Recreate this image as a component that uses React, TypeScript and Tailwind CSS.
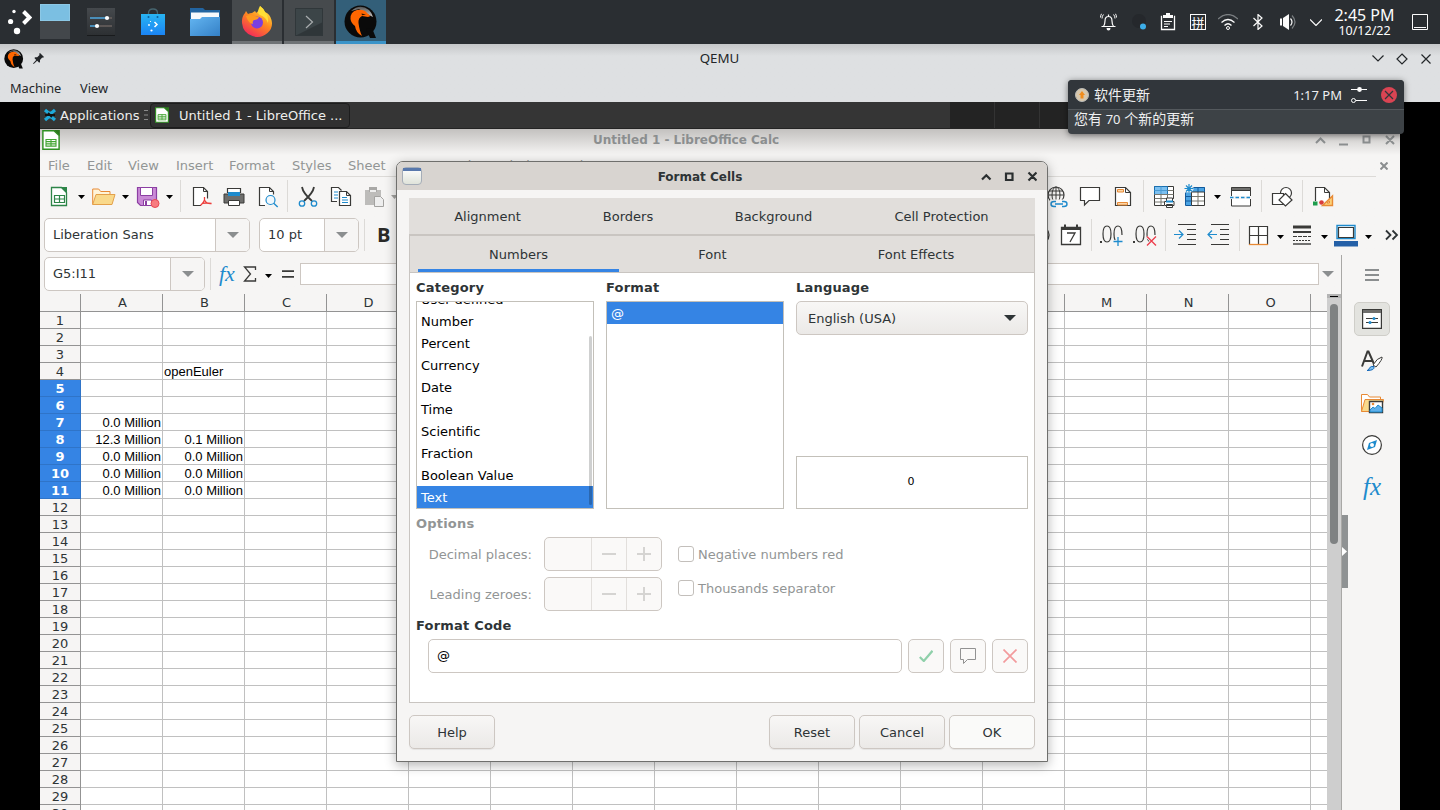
import React from "react";

type IconProps = { className?: string; box?: string; children: React.ReactNode };

function Icon({ className = "w-6 h-6", box = "0 0 24 24", children }: IconProps) {
  return (
    <svg viewBox={box} className={`block shrink-0 ${className}`} fill="none">
      {children}
    </svg>
  );
}

const Arrow = ({ className = "" }: { className?: string }) => (
  <Icon className={`w-[7px] h-1 ${className}`} box="0 0 7 4">
    <path d="M0 0h7L3.5 4z" fill="#000" />
  </Icon>
);

const ComboArrow = () => (
  <Icon className="w-3 h-1.5" box="0 0 12 6">
    <path d="M0 0h12L6 6z" fill="#8b8e8f" />
  </Icon>
);

const Sep = ({ className = "" }: { className?: string }) => (
  <div className={`w-px h-8 shrink-0 bg-[#dcdad7] ${className}`} />
);

function Qemu({ className }: { className: string }) {
  return (
    <Icon className={className} box="0 0 34 34">
      <defs>
        <linearGradient id="qemuGloss" x1="0" y1="0" x2="0" y2="1">
          <stop stopColor="#555" />
          <stop offset="1" stopColor="#c9c9c9" />
        </linearGradient>
      </defs>
      <circle cx="16.5" cy="16.5" r="16" fill="#0a0a0a" />
      <path d="M22 24l6-1 4 10h-6z" fill="#0a0a0a" />
      <path d="M7 6Q16-2 25 5q3 3 4 7l-6-3-8-5z" fill="url(#qemuGloss)" />
      <path d="M6.500 14Q6 7 13 5q7-1 10 3l3.500 3-2.500 1-6-1q-4 2-3.500 7 1 8 3.500 13-6-3-7-10-4-3-4.500-7z" fill="#f60" />
      <path d="M17.500 8.500l4.500 1-4 .8z" fill="#2a1200" />
    </Icon>
  );
}

function CalcDoc({ className }: { className: string }) {
  return (
    <Icon className={className} box="0 0 16 18">
      <path d="M.7.7h10L15.3 5v12.3H.7z" fill="#fff" stroke="#2f8f22" strokeWidth="1.3" />
      <path d="M10.500 0H16v5.500z" fill="#2c7a1d" />
      <path d="M3.500 8.500h9v6h-9zM3.500 10.500h9M3.500 12.500h9M8 8.500v6" stroke="#43a532" />
    </Icon>
  );
}

function Taskbar() {
  return (
    <div className="h-11 shrink-0 flex items-start bg-[#2a2e32]">
      <Icon className="ml-2 mt-2 w-6 h-7" box="0 0 24 28">
        <path d="M15.500 3.500l6 6-6 6" stroke="#fff" strokeWidth="4" />
        <circle cx="6" cy="3.500" r="1.700" fill="#fff" />
        <circle cx="2.600" cy="13.500" r="2.600" fill="#fff" />
        <circle cx="9" cy="23" r="3.200" fill="#fff" />
      </Icon>
      <div className="ml-2 mt-1 w-[30px] h-[35px]">
        <div className="h-[17px] bg-[#7bbfe2] border border-[#8cc8e6]" />
        <div className="h-[18px] bg-[#43474b]" />
      </div>
      <Icon className="ml-[17px] mt-2 w-7 h-7" box="0 0 28 28">
        <defs>
          <linearGradient id="dark" x1="0" y1="0" x2="0" y2="1">
            <stop stopColor="#45494d" />
            <stop offset="1" stopColor="#2c2f32" />
          </linearGradient>
        </defs>
        <path d="M0 0h28v28H0z" fill="url(#dark)" />
        <path d="M0 27.500h28" stroke="#191b1d" />
        <path d="M3 10h17M3 18h7" stroke="#4fa8e0" strokeWidth="1.500" />
        <path d="M20 10h5M10 18h15" stroke="#6a625f" strokeWidth="1.500" />
        <circle cx="20" cy="10" r="2.100" fill="#fff" />
        <circle cx="10" cy="18" r="2.100" fill="#fff" />
      </Icon>
      <Icon className="ml-[26px] mt-2 w-6 h-7" box="0 0 24 28">
        <defs>
          <linearGradient id="bag" x1="0" y1="0" x2="0" y2="1">
            <stop stopColor="#28b4f2" />
            <stop offset="1" stopColor="#1b84f4" />
          </linearGradient>
        </defs>
        <path d="M7.500 8V5q0-4 4.500-4t4.500 4v3" stroke="#47656f" strokeWidth="1.300" />
        <path d="M0 6h24v21H0z" fill="url(#bag)" />
        <circle cx="7.500" cy="9" r="1" fill="#0c5f9a" />
        <circle cx="16.500" cy="9" r="1" fill="#0c5f9a" />
        <path d="M13.500 14l2.500 2.500-2.500 2.500" stroke="#fff" strokeWidth="1.500" />
        <circle cx="9.500" cy="13.500" r=".6" fill="#fff" />
        <circle cx="8" cy="17" r=".9" fill="#fff" />
        <circle cx="10.500" cy="22.500" r="1.100" fill="#fff" />
      </Icon>
      <Icon className="ml-[25px] mt-2 w-[30px] h-7" box="0 0 30 28">
        <defs>
          <linearGradient id="folder" x1="0" y1="0" x2="1" y2="1">
            <stop stopColor="#63b5f1" />
            <stop offset="1" stopColor="#3480c6" />
          </linearGradient>
        </defs>
        <path d="M0 0h13l2 2h15v14H0z" fill="#2264a0" />
        <path d="M1 4.500h28V12H1z" fill="#f7f9fb" />
        <path d="M0 11h10l2-2h18v19H0z" fill="url(#folder)" />
      </Icon>
      <div className="ml-3 w-[50px] h-11 flex justify-center bg-[#464a4d] border-b-[3px] border-[#6f7376]">
        <Icon className="mt-1.5 w-8 h-8" box="0 0 32 32">
          <defs>
            <linearGradient id="fox" x1=".8" y1="0" x2=".2" y2="1">
              <stop stopColor="#fff044" />
              <stop offset=".45" stopColor="#ff8a1f" />
              <stop offset="1" stopColor="#f0205f" />
            </linearGradient>
          </defs>
          <path d="M19 0q4 3 5 6 5 2 6.500 8 2 8-4 13-7 6-15 3Q2 27 1 17q-.5-6 3-10l1-2 2 3q2-1 4-1l3-2q1 1 1 2 4-3 4-7z" fill="url(#fox)" />
          <path d="M19 0q4 3 5 6 4 5 3 11-2-6-8-8-4-2 0-9z" fill="#ffdf36" />
          <circle cx="16" cy="16.500" r="6" fill="#7a3fe0" />
          <path d="M5 10q5-2 8 0l5 1q-1 3-5 3-2 1-1 4-5-1-7-8z" fill="#ff9a1f" />
        </Icon>
      </div>
      <div className="ml-0.5 w-[50px] h-11 flex justify-center bg-[#464a4d] border-b-[3px] border-[#6f7376]">
        <Icon className="mt-2 w-7 h-7" box="0 0 28 28">
          <path d="M0 0h28v28H0z" fill="#3c4548" />
          <path d="M0 28h28V14z" fill="#2f3639" />
          <path d="M.5.500h27v27H.5z" stroke="#30373a" />
          <path d="M11 8l6.500 6-6.500 6" stroke="#a9adaf" strokeWidth="1.200" />
        </Icon>
      </div>
      <div className="ml-0.5 w-[50px] h-11 flex justify-center bg-[#335f79] border-b-[3px] border-[#3b94c9]">
        <Qemu className="mt-[5px] w-[34px] h-[34px]" />
      </div>

      <div className="ml-auto h-11 flex items-center">
        <Icon className="w-[17px] h-[18px]" box="0 0 17 18">
          <path d="M1.500 13.500h14M3.500 13.500Q5 11 5 8q0-4.500 3.500-4.500T12 8q0 3 1.500 5.500M8.500 3.500V1.500" stroke="#fcfcfc" strokeWidth="1.200" />
          <path d="M3.500 1.500Q2 3 2 5.500M1.500.800Q.5 2.500.5 4.500M13.500 1.500Q15 3 15 5.500M15.500.800q1 1.700 1 3.700" stroke="#fcfcfc" />
          <path d="M6.500 15h4q0 2.500-2 2.500t-2-2.500z" fill="#fcfcfc" />
        </Icon>
        <Icon className="ml-[15px] w-4 h-4" box="0 0 16 16">
          <circle cx="7" cy="7" r="7" fill="#25282c" />
          <circle cx="11" cy="12.500" r="3" fill="#3daee9" />
        </Icon>
        <Icon className="ml-3 w-4 h-[18px]" box="0 0 16 18">
          <path d="M2 3.500H1.500v13h13v-13H14" stroke="#fcfcfc" strokeWidth="1.300" />
          <path d="M3 5V2h3V0h4v2h3v3z" fill="#fcfcfc" />
          <path d="M4 8.500h8M4 11h6M4 13.500h4" stroke="#fcfcfc" strokeWidth="1.200" />
        </Icon>
        <div className="ml-[14px] w-4 h-4 border border-[#fcfcfc] flex items-center justify-center text-[13px] leading-none text-[#fcfcfc] font-['Noto_Sans_CJK_SC',sans-serif]">拼</div>
        <Icon className="ml-3 w-5 h-4" box="0 0 20 16">
          <path d="M0 5q10-9 20 0" stroke="#7b7f82" strokeWidth="1.200" />
          <path d="M3.500 8.500q6.500-6 13 0M6.500 11.500q3.500-3.500 7 0" stroke="#fcfcfc" strokeWidth="1.200" />
          <circle cx="10" cy="14" r="1.500" stroke="#fcfcfc" />
        </Icon>
        <Icon className="ml-[15px] w-2.5 h-4" box="0 0 10 16">
          <path d="M.5 4l8.500 8-4 3.500V.5L9 4 .5 12" stroke="#fcfcfc" strokeWidth="1.200" />
        </Icon>
        <Icon className="ml-[17px] w-4 h-4" box="0 0 16 16">
          <path d="M0 4.500h2v7H0zM3 4l6-4v16l-6-4z" fill="#fcfcfc" />
          <path d="M10.500 4.500q3 3.500 0 7" stroke="#fcfcfc" strokeWidth="1.200" />
          <path d="M12 1.500q6 6.500 0 13" stroke="#7b7f82" strokeWidth="1.200" />
        </Icon>
        <Icon className="ml-3.5 w-3 h-[7px]" box="0 0 12 7">
          <path d="M0 .5l6 6 6-6" stroke="#fcfcfc" strokeWidth="1.200" />
        </Icon>
        <div className="ml-[9px] w-[67px] text-center font-['Noto_Sans',sans-serif] text-[#fcfcfc] whitespace-nowrap">
          <div className="text-[16px] leading-[17px]">2:45 PM</div>
          <div className="text-[12.500px] leading-[13px]">10/12/22</div>
        </div>
        <Icon className="ml-[14px] mr-3 w-4 h-4" box="0 0 16 16">
          <path d="M.5.500h15v15H.5zM2 13.500h12" stroke="#fcfcfc" />
        </Icon>
      </div>
    </div>
  );
}

function QemuHeader() {
  return (
    <div className="h-[58px] shrink-0 bg-[#dee0e2] bg-linear-to-b from-[#c5c7c9] from-0% to-[#dee0e2] to-[12px] font-['Noto_Sans',sans-serif] text-[13.33px] text-[#232629]">
      <div className="h-[29px] flex items-center">
        <Qemu className="ml-1 w-5 h-5" />
        <Icon className="ml-[9px] w-[11px] h-[11px]" box="0 0 11 11">
          <path d="M7 0l4 4-1 .8-.8-.3L7 7v2l-.8.8-2-2L.7 11 0 10.500l3.200-3.500L1.400 5l.8-.8h2L6.500 2 6.200.8z" fill="#232629" />
        </Icon>
        <div className="flex-1 pl-[23px] text-center">QEMU</div>
        <div className="flex items-center">
          <Icon className="w-3 h-[7px]" box="0 0 12 7">
            <path d="M.5.500L6 6l5.500-5.500" stroke="#232629" strokeWidth="1.200" />
          </Icon>
          <Icon className="ml-3 w-3 h-3" box="0 0 12 12">
            <path d="M6 1l5 5-5 5-5-5z" stroke="#232629" strokeWidth="1.200" />
          </Icon>
          <Icon className="ml-[13px] mr-[9px] w-2.5 h-2.5" box="0 0 10 10">
            <path d="M.5.500l9 9M9.500.500l-9 9" stroke="#232629" strokeWidth="1.200" />
          </Icon>
        </div>
      </div>
      <div className="h-[29px] flex items-center pl-2.5 pt-0.5 text-[12.800px]">
        <span className="w-[70px]">Machine</span>
        <span>View</span>
      </div>
    </div>
  );
}

function GuestPanel() {
  return (
    <div className="h-[27px] shrink-0 flex items-center bg-[#353535] border-b border-[#242424] text-[13px] text-[#eeeeec] whitespace-nowrap">
      <Icon className="ml-[3px] w-3.5 h-3.5" box="0 0 14 14">
        <path d="M2 2l3.500 3h3L12 2M2 12l3.500-3h3l3.500 3" stroke="#1fa8d8" strokeWidth="3.200" />
        <path d="M2 7h10M5 5l4 4" stroke="#111" strokeWidth="2" />
      </Icon>
      <span className="ml-[3px] w-[81px] pt-0.5">Applications</span>
      <Icon className="ml-[3px] w-1 h-2.5" box="0 0 4 10">
        <path d="M0 .5h4M0 5h4M0 9.500h4" stroke="#8a8a8a" />
      </Icon>
      <div className="ml-0.5 w-[200px] h-[25px] flex items-center rounded border border-[#1d1d1d] bg-[#313131]">
        <CalcDoc className="ml-1 w-3.5 h-4" />
        <span className="ml-[10px] pt-px">Untitled 1 - LibreOffice ...</span>
      </div>
      <div className="ml-[600px] flex-1 h-full flex bg-[#232323]">
        <div className="w-[45px] border-r border-[#333]" />
        <div className="w-[45px] border-r border-[#333]" />
      </div>
    </div>
  );
}

function Combo({ className, field, children }: { className: string; field: string; children: React.ReactNode }) {
  return (
    <div className={`h-[34px] shrink-0 flex rounded-[5px] border border-[#cdc7c2] bg-white overflow-hidden ${className}`}>
      <div className={`flex items-center pl-2 border-r border-[#cdc7c2] ${field}`}>{children}</div>
      <div className="flex-1 flex items-center justify-center bg-[#f6f5f4]">
        <ComboArrow />
      </div>
    </div>
  );
}

const ink = "#3a3a38";
const blue = "#1e8bcd";

function StandardBar() {
  return (
    <div className="h-[39px] shrink-0 flex items-center pl-[7px] pb-px">
      <Icon>
        <path d="M4.500 3.500h10l5 5v13h-15z" fill="#fff" stroke="#2d8548" strokeWidth="1.300" />
        <path d="M13.500 3H20v6.500z" fill="#2d8548" />
        <path d="M7.500 11.500h10v7h-10zM7.500 15h10M12.500 11.500v7" stroke="#2d8548" strokeWidth="1.200" />
      </Icon>
      <Arrow className="ml-[7px] translate-y-px" />
      <Icon className="ml-[7px] w-6 h-6">
        <path d="M.7 20.500V5h6l2 2.500H18v3" fill="#fff4d8" stroke="#e88a35" />
        <path d="M.7 20.500L4 10.500h19l-3 10z" fill="#f9d98b" stroke="#e3a04a" />
      </Icon>
      <Arrow className="ml-[6px] translate-y-px" />
      <Icon className="ml-[7px] w-6 h-6">
        <path d="M1.500 3.500h19v18h-16l-3-3z" fill="#c98ad6" stroke="#8c3fa3" strokeWidth="1.200" />
        <path d="M4.500 3.500h12v8h-12z" fill="#fff" stroke="#8c3fa3" />
        <path d="M7.500 16h8v5.500h-8z" fill="#fff" stroke="#8c3fa3" />
        <path d="M9 17h2v4H9z" fill="#8c3fa3" />
        <circle cx="19" cy="19.500" r="4" fill="#f77c80" stroke="#e84a52" />
      </Icon>
      <Arrow className="ml-[6px] translate-y-px" />
      <Sep className="ml-[7px]" />
      <Icon className="ml-[9px] w-6 h-6">
        <path d="M11 21.500H3.500v-18h10l4 4v7" fill="#fff" stroke={ink} strokeWidth="1.200" />
        <path d="M13.500 3.500v4h4" stroke={ink} />
        <path d="M14.500 13v3q-1 3-4 5.500M14.500 16q2 4 7 3.500-6-1-9.500 0" stroke="#ed3d3b" strokeWidth="1.300" />
      </Icon>
      <Icon className="ml-2 w-6 h-6">
        <path d="M5.500 9V4.500h13V9" fill="#fff" stroke={ink} strokeWidth="1.200" />
        <path d="M2 10h20v9H2z" fill="#6e6e6c" stroke={ink} />
        <path d="M6 8h12v4H6z" fill="#1e8bcd" />
        <path d="M6.500 16.500h11v5h-11z" fill="#fff" stroke={ink} />
      </Icon>
      <Icon className="ml-[10px] w-6 h-6">
        <path d="M9 21.500H3.500v-18h10l4 4v3" fill="#fff" stroke={ink} strokeWidth="1.200" />
        <path d="M13.500 3.500v4h4" stroke={ink} />
        <circle cx="14.500" cy="16" r="4.500" fill="#f0f7fc" stroke={blue} strokeWidth="1.200" />
        <path d="M17.700 19.200l4 3.800" stroke={blue} strokeWidth="1.400" />
      </Icon>
      <Sep className="ml-[7px]" />
      <Icon className="ml-2 w-6 h-6">
        <path d="M6 3q1 6 10 14M18 3q-1 6-10 14" stroke={ink} strokeWidth="1.800" />
        <circle cx="6" cy="19.500" r="2.700" stroke={blue} strokeWidth="1.300" />
        <circle cx="18" cy="19.500" r="2.700" stroke={blue} strokeWidth="1.300" />
      </Icon>
      <Icon className="ml-[9px] w-6 h-6">
        <path d="M8 17.500H2.500v-14h7l3 3" fill="#fff" stroke={ink} strokeWidth="1.200" />
        <path d="M10.500 7.500h7l4 4v10h-11z" fill="#fff" stroke={ink} strokeWidth="1.200" />
        <path d="M17.500 7.500v4h4" stroke={ink} />
        <path d="M5 8h4M5 11h4M5 14h4M13 13.500h5M13 16h6M13 18.500h6" stroke={blue} />
      </Icon>
      <Icon className="ml-[9px] w-6 h-6">
        <path d="M3 6h16v15H3z" fill="#bdbcba" />
        <path d="M7 3h8v5H7z" fill="#a9a8a6" />
        <path d="M8 6h6v2H8z" fill="#eee" />
        <path d="M12.500 12.500h6l3 3v7h-9z" fill="#eee" stroke="#a3a2a0" />
      </Icon>
      <Icon className="ml-[5px] w-[7px] h-1 translate-y-px" box="0 0 7 4">
        <path d="M0 0h7L3.500 4z" fill="#a3a2a0" />
      </Icon>

      <Icon className="ml-[647px] w-6 h-6">
        <circle cx="11" cy="11" r="8" stroke={ink} strokeWidth="1.200" />
        <ellipse cx="11" cy="11" rx="4" ry="8" stroke={ink} />
        <path d="M3 11h16M4 7h14M11 3v16" stroke={ink} />
        <path d="M5 15.500h18v8H5z" fill="#f6f5f4" />
        <path d="M11 22.500H9q-3 0-3-2.500t3-2.500h2M17 17.500h2q3 0 3 2.500t-3 2.500h-2M10 20h8" stroke={blue} strokeWidth="1.400" />
      </Icon>
      <Icon className="ml-[9px] w-6 h-6">
        <path d="M2.500 3.500h19v13H11L6.500 21v-4.500h-4z" fill="#fff" stroke={ink} strokeWidth="1.200" />
      </Icon>
      <Icon className="ml-[9px] w-6 h-6">
        <path d="M4.500 3.500h10l5 5v13h-15z" fill="#fff" stroke={ink} strokeWidth="1.200" />
        <path d="M14.500 3.500v5h5" stroke={ink} />
        <path d="M6.500 5.500h6v2.500h-6zM6.500 18.500h10V21h-10z" fill="#fbd6a8" stroke="#e88a35" />
      </Icon>
      <Sep className="ml-2" />
      <Icon className="ml-2 w-6 h-6">
        <path d="M2.500 2.500h19v19h-19z" fill="#fff" stroke={ink} />
        <path d="M2.500 2.500h13v8h-13z" fill="#7cc0f0" stroke="#1a70b0" />
        <path d="M2.500 6.500h13M9 2.500v8" stroke="#4a9bd4" />
        <path d="M15.500 6.500h6M2.500 10.500h19M2.500 14.500h19M2.500 18h19M9 10.500v11M15.500 10.500v11" stroke="#77776f" />
        <path d="M12 15h11v8H12z" fill="#f6f5f4" />
        <path d="M14.500 17v-3h6v3M12.500 17.500h9.500v4h-9.500zM14.500 20.500h6v3h-6z" fill="#fff" stroke={ink} />
        <path d="M14 17.500h7" stroke={blue} strokeWidth="2" />
      </Icon>
      <Icon className="ml-[7px] w-6 h-6">
        <path d="M2.500 3.500h19v18h-19z" fill="#fff" />
        <path d="M3 3h19v5H3zM3 3h5.500v19H3z" fill="#4aa3e3" />
        <path d="M8.500 12.500h13M8.500 17h13M15 8v13.500" stroke="#77776f" />
        <path d="M8.500 8h13v13.500h-13z" stroke={ink} />
        <path d="M8.500 3.500h13V8M2.500 8.500v13h6M2.500 12.500h6M2.500 17h6M15 3.500V8" stroke="#125a9c" />
        <path d="M6 0v9M1.500 4.500h9M3 1.500l6 6M9 1.500l-6 6" stroke="#f6f5f4" strokeWidth="2.600" />
        <path d="M6 0v9M1.500 4.500h9M3 1.500l6 6M9 1.500l-6 6" stroke={blue} strokeWidth="1.200" />
      </Icon>
      <Arrow className="ml-[7px] translate-y-px" />
      <Icon className="ml-2 w-6 h-6">
        <path d="M2.500 4h19v18h-19z" fill="#fff" stroke={ink} />
        <path d="M2.500 3.500h19v3h-19z" fill="#6e6e6c" stroke={ink} />
        <path d="M0 12h24v3H0z" fill="#f6f5f4" />
        <path d="M1 13.500h22" stroke={blue} strokeWidth="1.400" strokeDasharray="3.500 2" />
      </Icon>
      <Sep className="ml-2" />
      <Icon className="ml-2 w-6 h-6">
        <circle cx="16" cy="9" r="5.500" fill="#fff" stroke={ink} strokeWidth="1.200" />
        <path d="M2.500 9.500h11v11h-11z" fill="#fff" stroke={ink} strokeWidth="1.200" />
        <path d="M15.500 9.500l6.500 6.500-6.500 6-6.500-6z" fill="#fff" stroke={ink} strokeWidth="1.200" />
      </Icon>
      <Sep className="ml-2" />
      <Icon className="ml-2 w-6 h-6">
        <path d="M4.500 17V3.500h9l5 5V17" fill="#fff" stroke={ink} strokeWidth="1.200" />
        <path d="M13.500 3.500v5h5" stroke={ink} />
        <path d="M2 17.500h4.500v4H2z" fill="#1f9d4d" />
        <circle cx="10.500" cy="18.500" r="2.300" fill="#d93c3c" />
        <path d="M21.500 12v9.500H11.500z" fill="#fbd27a" stroke="#e88a35" strokeWidth="1.400" />
        <path d="M18.500 17v2H16z" fill="#fff" stroke="#e88a35" />
      </Icon>
    </div>
  );
}

function FormattingBar() {
  return (
    <div className="h-[39px] shrink-0 flex items-center pl-1 pb-px">
      <Combo className="w-[206px]" field="w-[171px]">Liberation Sans</Combo>
      <Combo className="ml-[9px] w-[100px]" field="w-[65px]">10 pt</Combo>
      <Sep className="ml-[5px]" />
      <span className="ml-3 w-4 font-['Open_Sans',sans-serif] text-[20px] font-bold leading-none text-[#2a2a28]">B</span>
      <Icon className="ml-[637px] w-6 h-6">
        <circle cx="10" cy="12" r="9" stroke={ink} strokeWidth="1.300" />
      </Icon>
      <Icon className="ml-[5px] w-6 h-6">
        <path d="M2.500 4.500h19v17h-19z" fill="#fff" stroke={ink} strokeWidth="1.300" />
        <path d="M2.500 5.500h19" stroke={ink} strokeWidth="3" />
        <path d="M6 1.500v3M18 1.500v3" stroke={ink} strokeWidth="2" />
        <path d="M8 10h8l-5 9" stroke={ink} strokeWidth="1.300" />
      </Icon>
      <Sep className="ml-2" />
      <Icon className="ml-2 w-6 h-6">
        <path d="M0 18h2v2H0z" fill={ink} />
        <path d="M3 11q0-8 4-8t4 8-4 8-4-8zM22 12q0-9-4-9t-4 8 4 8" stroke={ink} strokeWidth="1.200" />
        <path d="M18 14v9M13.500 18.500h9" stroke="#f6f5f4" strokeWidth="3" />
        <path d="M18 14v9M13.500 18.500h9" stroke={blue} strokeWidth="1.300" />
      </Icon>
      <Icon className="ml-[9px] w-6 h-6">
        <path d="M0 18h2v2H0z" fill={ink} />
        <path d="M3 11q0-8 4-8t4 8-4 8-4-8zM22 12q0-9-4-9t-4 8 4 8" stroke={ink} strokeWidth="1.200" />
        <path d="M14 13.500l9 9M23 13.500l-9 9" stroke="#f6f5f4" strokeWidth="3" />
        <path d="M14 13.500l9 9M23 13.500l-9 9" stroke="#ed3d4b" strokeWidth="1.300" />
      </Icon>
      <Sep className="ml-2" />
      <Icon className="ml-2 w-6 h-6">
        <path d="M4 1.500h18M13 6.500h9M13 11.500h9M13 16.500h9M4 21.500h18" stroke={ink} strokeWidth="1.200" />
        <path d="M0 11.500h9M5 7.500l4 4-4 4" stroke={blue} strokeWidth="1.200" />
      </Icon>
      <Icon className="ml-[9px] w-6 h-6">
        <path d="M4 1.500h18M13 6.500h9M13 11.500h9M13 16.500h9M4 21.500h18" stroke={ink} strokeWidth="1.200" />
        <path d="M1 11.500h9M5 7.500l-4 4 4 4" stroke={blue} strokeWidth="1.200" />
      </Icon>
      <Sep className="ml-2" />
      <Icon className="ml-[7px] w-6 h-6">
        <path d="M2.500 3.500h18v18h-18zM11.500 3.500v18M2.500 12.500h18" fill="#fff" stroke={ink} strokeWidth="1.200" />
        <path d="M2 21.500h19" stroke="#e88a35" strokeWidth="1.300" />
      </Icon>
      <Arrow className="ml-[6px] translate-y-0.5" />
      <Icon className="ml-[7px] w-6 h-6">
        <path d="M2 4h18" stroke={ink} strokeWidth="3" />
        <path d="M2 9h18" stroke={ink} strokeWidth="2" />
        <path d="M2 13.500h18" stroke={ink} strokeDasharray="4 1" />
        <path d="M2 17.500h18" stroke={ink} strokeDasharray="2 1" />
        <path d="M2 21h18" stroke={ink} strokeWidth="1.400" />
      </Icon>
      <Arrow className="ml-[6px] translate-y-0.5" />
      <Icon className="ml-[6px] w-6 h-6">
        <path d="M3 2.500h18v13H3z" fill="#fff" stroke={blue} strokeWidth="1.400" />
        <path d="M4.500 4.500h15v10h-15z" stroke={ink} strokeWidth="1.200" />
        <path d="M0 18h24v5.500H0z" fill="#2460a7" />
      </Icon>
      <Arrow className="ml-[7px] translate-y-0.5" />
      <Icon className="ml-[13px] w-3.5 h-3" box="0 0 14 12">
        <path d="M1 1.500L5.500 6 1 10.500M7.500 1.500L12 6l-4.500 4.500" stroke="#2e3436" strokeWidth="1.800" />
      </Icon>
    </div>
  );
}

const Fx = ({ className }: { className: string }) => (
  <span className={`font-['Liberation_Serif',serif] italic text-[#1e8bcd] leading-none ${className}`}>fx</span>
);

function FormulaBar() {
  return (
    <div className="h-[39px] shrink-0 flex items-center pl-1 pb-px">
      <Combo className="w-[161px]" field="w-[126px]">G5:I11</Combo>
      <Sep className="ml-[5px]" />
      <Fx className="ml-2 w-4 text-[22px]" />
      <Icon className="ml-2 w-3.5 h-4" box="0 0 14 16">
        <path d="M12.500 4V1H1.500l6 7-6 7h11v-3" stroke={ink} strokeWidth="1.300" />
      </Icon>
      <Arrow className="ml-2 translate-y-0.5" />
      <Icon className="ml-[10px] w-3 h-2" box="0 0 12 8">
        <path d="M0 1.200h12M0 6.800h12" stroke={ink} strokeWidth="1.800" />
      </Icon>
      <div className="ml-[6px] w-[1019px] h-[22px] border border-[#cdc7c2] bg-white" />
      <div className="ml-[3px]">
        <ComboArrow />
      </div>
    </div>
  );
}

const columns = "ABCDEFGHIJKLMNO".split("");
const cells: Record<string, string> = {
  B4: "openEuler",
  A7: "0.0 Million",
  A8: "12.3 Million",
  B8: "0.1 Million",
  A9: "0.0 Million",
  B9: "0.0 Million",
  A10: "0.0 Million",
  B10: "0.0 Million",
  A11: "0.0 Million",
  B11: "0.0 Million",
};

function Sheet() {
  return (
    <div className="w-[1287px] shrink-0 overflow-hidden bg-white">
      <div className="h-[18px] flex border-b border-[#939393] bg-[#f6f5f4] text-[13px] leading-[17px] text-[#2e3436]">
        <div className="w-[41px] shrink-0 border-r border-[#939393]" />
        {columns.map((c) => (
          <div key={c} className="w-[82px] shrink-0 border-r border-[#939393] pl-0.5 text-center">{c}</div>
        ))}
      </div>
      {Array.from({ length: 30 }, (_, i) => i + 1).map((row) => (
        <div key={row} className="h-[17px] flex">
          <div
            className={
              row >= 5 && row <= 11
                ? "w-[41px] shrink-0 border-r border-b border-[#2f74c8] bg-[#3584e4] text-white font-bold text-center text-[13px] leading-[17px]"
                : "w-[41px] shrink-0 border-r border-b border-[#939393] bg-[#f6f5f4] text-[#2e3436] text-center text-[13px] leading-[17px]"
            }
          >
            {row}
          </div>
          {columns.map((c) => (
            <div
              key={c}
              className={`w-[82px] shrink-0 border-r border-b border-[#c0c0c0] px-px font-['Liberation_Sans',sans-serif] text-[13px] leading-[17px] text-black whitespace-nowrap ${c + row === "B4" ? "text-left" : "text-right"}`}
            >
              {cells[c + row]}
            </div>
          ))}
          <div className="flex-1 border-b border-[#c0c0c0]" />
        </div>
      ))}
    </div>
  );
}

function Sidebar() {
  return (
    <div className="w-[59px] shrink-0 flex border-l border-[#a9a8a6] bg-[#f6f5f4]">
      <div className="w-[6px] pt-[260px]">
        <div className="h-[73px] bg-[#8f9293] flex items-center">
          <Icon className="w-[5px] h-[9px]" box="0 0 5 9">
            <path d="M0 0l5 4.500L0 9z" fill="#fff" />
          </Icon>
        </div>
      </div>
      <div className="ml-[6px] w-9 flex flex-col items-center">
        <Icon className="mt-3.5 w-3.5 h-3" box="0 0 14 12">
          <path d="M0 1h14M0 6h14M0 11h14" stroke="#8b8e8f" strokeWidth="1.800" />
        </Icon>
        <div className="mt-[21px] w-9 h-[34px] rounded-[5px] border border-[#cfcec9] bg-[#e3e3df] flex items-center justify-center">
          <Icon className="w-5 h-5" box="0 0 20 20">
            <path d="M.6.600h18.800v18.800H.6z" fill="#fff" stroke={ink} strokeWidth="1.200" />
            <path d="M1 1h18v3H1z" fill="#6e6e6c" />
            <path d="M4 9.500h12M4 13.500h12" stroke={ink} strokeWidth="1.200" />
            <circle cx="12" cy="9.500" r="1.500" fill={blue} />
            <circle cx="8" cy="13.500" r="1.500" fill={blue} />
          </Icon>
        </div>
        <Icon className="mt-[14px] w-[22px] h-[22px]" box="0 0 22 22">
          <path d="M1 16.500L6.500 1.500h1L13 14M3 11h8" stroke={ink} strokeWidth="2" />
          <path d="M12 15q4-7 9-8 1 2-6 10z" fill="#fff" stroke={ink} />
          <path d="M6 20.500q2 0 2-2 2-3 5-2 1 4-7 4z" fill="#7cc0f0" stroke="#1567b8" />
        </Icon>
        <Icon className="mt-[19px] w-6 h-6">
          <path d="M1.500 20.500V3.500h6l2 2.500h11v4" fill="#fff" stroke="#e88a35" />
          <path d="M1.500 20.500L5 8.500h18.500l-3 12z" fill="#f9d98b" stroke="#e88a35" />
          <path d="M9.500 10.500h13v11h-13z" fill="#fff" stroke={ink} strokeWidth="1.400" />
          <path d="M10 19l3-3 2 1.500 3-3.500 4 3v4H10z" fill="#5fb0ea" stroke={blue} />
          <circle cx="13" cy="13" r="1.300" fill="#e88a35" />
        </Icon>
        <Icon className="mt-5 w-5 h-5" box="0 0 20 20">
          <circle cx="10" cy="10" r="9.400" fill="#fff" stroke={ink} strokeWidth="1.200" />
          <path d="M15 5l-2 7-8 3 2-7z" fill={blue} />
          <circle cx="10" cy="10" r="2" fill="#fff" />
        </Icon>
        <Fx className="mt-[19px] text-[25px]" />
      </div>
    </div>
  );
}

function CalcWindow() {
  return (
    <div className="flex-1 min-h-0 flex flex-col bg-[#f6f5f4] bg-linear-to-b from-[#c3c1bf] to-[#f6f5f4] to-[26px] text-[13px] text-[#2e3436]">
      <div className="h-[25px] shrink-0 flex items-start text-[#8b8e8f]">
        <CalcDoc className="ml-0.5 mt-px w-[18px] h-5" />
        <span className="ml-[533px] mt-[3px] w-[200px] text-[12px] leading-[16px] font-bold whitespace-nowrap">Untitled 1 - LibreOffice Calc</span>
        <Icon className="ml-[522px] mt-[6px] w-20 h-[11px]" box="0 0 80 11">
          <path d="M1 8l4.500-4.500L10 8M24 9.500h9M48.500 1.500h6v6h-6zM71 1l8 8M79 1l-8 8" stroke="#8b8e8f" strokeWidth="2" />
        </Icon>
      </div>
      <div className="h-[23px] shrink-0 flex items-center mr-6 border-b border-[#dcdad7] pl-2 pt-0.5 text-[#929595]">
        <span className="w-[39px]">File</span>
        <span className="w-[41px]">Edit</span>
        <span className="w-12">View</span>
        <span className="w-[53px]">Insert</span>
        <span className="w-[63px]">Format</span>
        <span className="w-14">Styles</span>
        <span className="w-[53px]">Sheet</span>
        <span className="w-[45px]">Data</span>
        <span className="w-[51px]">Tools</span>
        <span className="w-[65px]">Window</span>
        <span>Help</span>
        <Icon className="ml-auto -mr-[12px] w-2 h-2" box="0 0 8 8">
          <path d="M.5.500l7 7M7.500.500l-7 7" stroke="#8b8e8f" strokeWidth="2" />
        </Icon>
      </div>
      <StandardBar />
      <FormattingBar />
      <div className="flex-1 min-h-0 flex">
        <div className="w-[1301px] shrink-0 flex flex-col">
          <FormulaBar />
          <div className="flex-1 min-h-0 flex">
            <Sheet />
            <div className="flex-1 bg-[#cecece]">
              <div className="h-1 bg-[#b4b4b4] flex items-center justify-center">
                <div className="w-2 h-px bg-black" />
              </div>
              <div className="mx-auto mt-[6px] w-2 h-60 rounded bg-[#7f8283]" />
            </div>
          </div>
        </div>
        <Sidebar />
      </div>
    </div>
  );
}

function Spin() {
  return (
    <div className="w-[118px] h-[34px] flex rounded-[5px] border border-[#cdc7c2] bg-[#faf9f8]">
      <div className="w-[47px] border-r border-[#e2dfdc]" />
      <div className="w-[35px] border-r border-[#e2dfdc] flex items-center justify-center">
        <div className="w-3.5 h-0.5 bg-[#d5d4d2]" />
      </div>
      <div className="flex-1 flex items-center justify-center">
        <Icon className="w-3.5 h-3.5" box="0 0 14 14">
          <path d="M0 7h14M7 0v14" stroke="#d5d4d2" strokeWidth="2" />
        </Icon>
      </div>
    </div>
  );
}

const Check = ({ label }: { label: string }) => (
  <div className="h-[34px] flex items-center">
    <div className="w-4 h-4 rounded-[3px] border border-[#c3bfbb] bg-white" />
    <span className="ml-1 pt-0.5">{label}</span>
  </div>
);

const Button = ({ className = "", children }: { className?: string; children: React.ReactNode }) => (
  <div className={`w-[86px] h-[34px] flex items-center justify-center pt-0.5 rounded-[5px] border border-[#cdc7c2] shadow-[0_1px_1px_rgba(0,0,0,0.07)] ${className}`}>
    {children}
  </div>
);

const SmallButton = ({ children }: { children: React.ReactNode }) => (
  <div className="ml-[6px] w-9 h-[34px] flex items-center justify-center rounded-[5px] border border-[#cdc7c2] bg-[#faf9f8]">{children}</div>
);

const categories = ["User-defined", "Number", "Percent", "Currency", "Date", "Time", "Scientific", "Fraction", "Boolean Value", "Text"];

const Heading = ({ className = "", children }: { className?: string; children: React.ReactNode }) => (
  <div className={`h-7 pt-0.5 leading-[26px] text-[13px] tracking-[0.2px] font-bold ${className}`}>{children}</div>
);

function FormatCellsDialog() {
  return (
    <div className="absolute left-[396px] top-[161px] w-[652px] h-[601px] flex flex-col rounded-t-[7px] border border-[#6f6f6d] bg-[#f6f5f4] shadow-[0_3px_12px_rgba(0,0,0,0.3)] text-[13px] text-[#2e3436] whitespace-nowrap overflow-hidden">
      <div className="h-7 shrink-0 flex items-center bg-[#d8d4d0]">
        <div className="ml-[5px] w-5 h-[18px] rounded-sm border border-[#a5adb8] bg-linear-to-b from-white to-[#dfe3da]">
          <div className="h-[3px] bg-[#5878ac]" />
        </div>
        <span className="flex-1 text-center pt-px text-[12px] font-bold">Format Cells</span>
        <Icon className="ml-[3px] mr-[10px] w-14 h-3 translate-y-px" box="0 0 56 12">
          <path d="M1 8.500L5.300 4.200 9.500 8.500M25 2.500h6.500V9H25zM47.500 1.500l8 8M55.500 1.500l-8 8" stroke="#2b2f30" strokeWidth="2.200" />
        </Icon>
      </div>
      <div className="mx-3 mt-2 h-[38px] shrink-0 flex items-center pt-0.5 bg-[#e1dedb] border-b-2 border-[#c9c5c1] text-center">
        <span className="w-[157px]">Alignment</span>
        <span className="w-[124px]">Borders</span>
        <span className="w-[167px]">Background</span>
        <span className="w-[169px]">Cell Protection</span>
      </div>
      <div className="mx-3 h-[37px] shrink-0 flex bg-[#e1dedb] border border-t-0 border-[#c9c5c1] pl-2 text-center leading-[37px]">
        <span className="w-[201px] border-b-[3px] border-[#3584e4]">Numbers</span>
        <span className="w-[187px]">Font</span>
        <span className="w-[220px]">Font Effects</span>
      </div>
      <div className="mx-3 h-[430px] shrink-0 bg-white border border-t-0 border-[#c9c5c1] px-[6px]">
        <div className="flex gap-3">
          <div className="w-[178px]">
            <Heading>Category</Heading>
            <div className="h-[208px] flex border border-[#c3c0b9] overflow-hidden text-black">
              <div className="flex-1 flex flex-col justify-end">
                {categories.map((c) => (
                  <div
                    key={c}
                    className={c === "Text" ? "h-[22px] shrink-0 pl-1 pt-0.5 leading-[20px] bg-[#3584e4] text-white" : "h-[22px] shrink-0 pl-1 pt-0.5 leading-[20px]"}
                  >
                    {c}
                  </div>
                ))}
              </div>
              <div className="w-[4px] flex flex-col">
                <div className="mt-[34px] w-[3px] h-[150px] rounded-t bg-[#cfd0d0]" />
                <div className="flex-1 bg-[#3584e4]">
                  <div className="w-[3px] h-[19px] rounded-b bg-[#2a67b0]" />
                </div>
              </div>
            </div>
          </div>
          <div className="w-[178px]">
            <Heading>Format</Heading>
            <div className="h-[208px] border border-[#c3c0b9]">
              <div className="h-[22px] pl-1 pt-0.5 leading-[20px] bg-[#3584e4] text-white">@</div>
            </div>
          </div>
          <div className="w-[232px] flex flex-col">
            <Heading>Language</Heading>
            <div className="h-[34px] flex items-center justify-between rounded-[5px] border border-[#cdc7c2] bg-linear-to-b from-[#f8f7f6] to-[#ebe9e7] pl-[11px] pr-[11px]">
              <span className="pt-0.5">English (USA)</span>
              <Icon className="w-3 h-1.5" box="0 0 12 6">
                <path d="M0 0h12L6 6z" fill="#2e3436" />
              </Icon>
            </div>
            <div className="mt-auto h-[53px] border border-[#c3c0b9] flex items-center justify-center pb-px pr-0.5 text-[11px] text-black">0</div>
          </div>
        </div>
        <Heading className="text-[#929595]">Options</Heading>
        <div className="flex text-[#929595]">
          <div className="w-[116px] flex flex-col gap-[6px] text-right leading-[32px]">
            <div className="h-[34px] pt-0.5">Decimal places:</div>
            <div className="h-[34px] pt-0.5">Leading zeroes:</div>
          </div>
          <div className="ml-3 flex flex-col gap-[6px]">
            <Spin />
            <Spin />
          </div>
          <div className="ml-4">
            <Check label="Negative numbers red" />
            <Check label="Thousands separator" />
          </div>
        </div>
        <Heading>Format Code</Heading>
        <div className="flex pl-3">
          <div className="w-[474px] h-[34px] flex items-center rounded-[5px] border border-[#cdc7c2] pl-2 text-black">@</div>
          <SmallButton>
            <Icon className="w-3.5 h-3" box="0 0 14 12">
              <path d="M.8 7l4 4L13.500.8" stroke="#8fd0aa" strokeWidth="2.200" />
            </Icon>
          </SmallButton>
          <SmallButton>
            <Icon className="w-4 h-4" box="0 0 16 16">
              <path d="M.5.500h15v11H7.500l-4 4v-4h-3z" stroke="#929292" />
            </Icon>
          </SmallButton>
          <SmallButton>
            <Icon className="w-3.5 h-3.5" box="0 0 14 14">
              <path d="M.5.500l13 13M13.500.500l-13 13" stroke="#f29b9d" strokeWidth="1.700" />
            </Icon>
          </SmallButton>
        </div>
      </div>
      <div className="mx-3 mt-3 flex gap-1">
        <Button className="mr-auto bg-linear-to-b from-[#f8f7f6] to-[#ebe9e7]">Help</Button>
        <Button className="bg-linear-to-b from-[#f8f7f6] to-[#ebe9e7]">Reset</Button>
        <Button className="bg-linear-to-b from-[#f8f7f6] to-[#ebe9e7]">Cancel</Button>
        <Button className="bg-[#fafaf9]">OK</Button>
      </div>
    </div>
  );
}

function Notification() {
  return (
    <div className="absolute left-[1068px] top-[80px] w-[336px] h-[54px] rounded-sm overflow-hidden bg-[#3d4246] shadow-[0_1px_6px_rgba(0,0,0,0.5)] font-['Noto_Sans','Noto_Sans_CJK_SC',sans-serif] text-[#eff0f1] whitespace-nowrap">
      <div className="h-[30px] flex items-center bg-[#31363b] border-b border-[#54595d]">
        <Icon className="ml-[7px] w-3.5 h-3.5" box="0 0 14 14">
          <circle cx="7" cy="7" r="6.500" fill="#d8c7ab" stroke="#b9bbb9" />
          <path d="M7 3l3 4H8.500v3.500h-3V7H4z" fill="#f08c1c" />
        </Icon>
        <span className="ml-[5px] text-[14px]">软件更新</span>
        <span className="ml-auto pt-0.5 text-[13px]">1:17 PM</span>
        <Icon className="ml-[9px] w-4 h-4" box="0 0 16 16">
          <path d="M0 2.500h16M5 13.500h11" stroke="#fcfcfc" strokeWidth="1.100" />
          <circle cx="8.500" cy="2.500" r="2.400" fill="#fcfcfc" />
          <circle cx="2.500" cy="13.500" r="2" stroke="#fcfcfc" />
        </Icon>
        <Icon className="ml-3.5 mr-[7px] w-4 h-4" box="0 0 16 16">
          <circle cx="8" cy="8" r="8" fill="#da4453" />
          <path d="M4 4l8 8M12 4l-8 8" stroke="#31363b" strokeWidth="1.200" />
        </Icon>
      </div>
      <div className="pl-[6px] h-6 leading-[18px] text-[14px]">您有 <span className="text-[13px]">70</span> 个新的更新</div>
    </div>
  );
}

export default function App() {
  return (
    <div className="relative w-[1440px] h-[810px] flex flex-col overflow-hidden bg-black font-['DejaVu_Sans',sans-serif]">
      <Taskbar />
      <QemuHeader />
      <div className="flex-1 min-h-0 mx-10 flex flex-col overflow-hidden">
        <GuestPanel />
        <CalcWindow />
      </div>
      <FormatCellsDialog />
      <Notification />
    </div>
  );
}
